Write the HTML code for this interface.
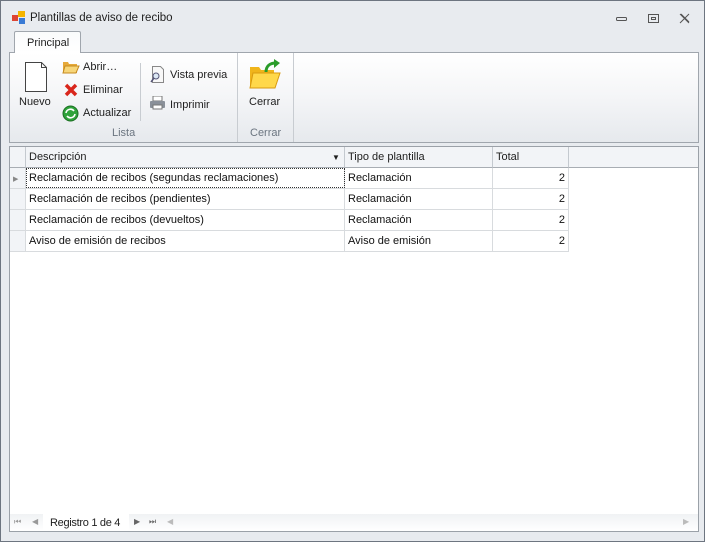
<!DOCTYPE html><html><head><style>
*{margin:0;padding:0;box-sizing:border-box}
body{width:705px;height:542px;overflow:hidden;font-family:"Liberation Sans",sans-serif;font-size:11px;color:#1e1e1e;background:#fff}
.win{position:absolute;left:0;top:0;width:705px;height:542px;background:#e8ebef;border:1px solid #6d7580}
.abs{position:absolute}
.t{position:absolute;white-space:nowrap}
.rib{position:absolute;left:8px;top:51px;width:690px;height:91px;border:1px solid #a0a6ad;background:linear-gradient(#fff,#f4f5f7 50%,#e6e9ed)}
.rib .t{font-size:11px}
.tab{position:absolute;left:13px;top:30px;width:67px;height:22px;border:1px solid #a0a6ad;border-bottom:none;background:linear-gradient(#fafbfc,#fff);border-radius:2px 2px 0 0;z-index:2}
.grid{position:absolute;left:8px;top:145px;width:690px;height:386px;border:1px solid #9ba1a8;background:#fff}
.hd{position:absolute;top:0;height:21px;border-right:1px solid #c4c9cf;border-bottom:1px solid #a8adb3;background:#f2f4f7}
.row{position:absolute;left:0;height:21px;width:559px;border-bottom:1px solid #d8dbde}
.c{position:absolute;top:0;height:20px;border-right:1px solid #d8dbde;padding:4px 3px;color:#111}
</style></head><body><div class="win">
<svg class="abs" style="left:11px;top:10px" width="14" height="14"><rect x="0" y="4" width="6" height="6" fill="#d43"/><rect x="6" y="0" width="7" height="6" fill="#f4b400"/><rect x="7" y="7" width="6" height="6" fill="#3a7bd5"/></svg>
<div class="t" style="left:29px;top:11px;font-size:11.5px">Plantillas de aviso de recibo</div>
<svg class="abs" style="left:613px;top:12px" width="80" height="12" fill="none" stroke="#555"><rect x="2.5" y="4.5" width="10" height="3" rx="1"/><rect x="34.5" y="1.5" width="10" height="8"/><rect x="37.5" y="4.5" width="4" height="2"/><path d="M66 1l9 9M75 1l-9 9M67 1l8 8"/></svg>
<div class="tab"><div class="t" style="left:12px;top:5px;font-size:11px">Principal</div></div>
<div class="rib">
<svg class="abs" style="left:14px;top:8px" width="24" height="32"><path d="M1.5 1.5h16l5 5v24h-21z" fill="#fff" stroke="#444"/><path d="M17.5 1.5v5h5" fill="none" stroke="#444"/></svg>
<div class="t" style="left:9px;top:43px">Nuevo</div>
<svg class="abs" style="left:52px;top:7px" width="18" height="14"><path d="M1 2h5l1 2h8v9H1z" fill="#e6a93a"/><path d="M3 6h14l-3 7H1z" fill="#f7d679" stroke="#c58a1f"/></svg>
<div class="t" style="left:73px;top:8px">Abrir…</div>
<svg class="abs" style="left:54px;top:30px" width="14" height="14"><path d="M2 2l10 10M12 2L2 12" stroke="#d9261c" stroke-width="3.5"/></svg>
<div class="t" style="left:73px;top:31px">Eliminar</div>
<svg class="abs" style="left:52px;top:52px" width="17" height="17"><circle cx="8.5" cy="8.5" r="7.5" fill="#2fa33a" stroke="#1b6e22"/><path d="M4 8a4.5 4.5 0 0 1 8-2M13 9a4.5 4.5 0 0 1-8 2" stroke="#fff" stroke-width="1.6" fill="none"/></svg>
<div class="t" style="left:73px;top:54px">Actualizar</div>
<div class="abs" style="left:130px;top:10px;width:1px;height:58px;background:#c8ccd1"></div>
<svg class="abs" style="left:139px;top:13px" width="16" height="18"><path d="M3.5 .5h8l3 3v13h-11z" fill="#f8f8f8" stroke="#888"/><circle cx="7" cy="10" r="3" fill="#dce8f4" stroke="#557"/><path d="M5 12l-3 4" stroke="#557" stroke-width="1.5"/></svg>
<div class="t" style="left:160px;top:16px">Vista previa</div>
<svg class="abs" style="left:139px;top:43px" width="17" height="14"><rect x="4" y="0" width="9" height="5" fill="#fff" stroke="#777"/><rect x="1" y="5" width="15" height="7" rx="1" fill="#8a9099"/><rect x="4" y="9" width="9" height="4" fill="#fff" stroke="#777"/></svg>
<div class="t" style="left:160px;top:46px">Imprimir</div>
<div class="t" style="left:102px;top:74px;color:#6b7580">Lista</div>
<div class="abs" style="left:227px;top:0;width:1px;height:89px;background:#c8ccd1"></div>
<svg class="abs" style="left:238px;top:6px" width="34" height="32"><path d="M2 8h9l2 3h13v17H2z" fill="#f0b51b"/><path d="M5 14h27l-5 15H2z" fill="#ffd84a" stroke="#d89a10"/><path d="M18 13c0-6 4-9 10-9" stroke="#2a9c2a" stroke-width="3" fill="none"/><path d="M26 0l6 4-6 5z" fill="#2a9c2a"/></svg>
<div class="t" style="left:239px;top:43px">Cerrar</div>
<div class="t" style="left:240px;top:74px;color:#6b7580">Cerrar</div>
<div class="abs" style="left:283px;top:0;width:1px;height:89px;background:#c8ccd1"></div>
</div>
<div class="grid">
<div class="hd" style="left:0;width:16px"></div>
<div class="hd" style="left:16px;width:319px"><div class="t" style="left:3px;top:4px">Descripción</div><div class="t" style="left:306px;top:6px;font-size:8px">▼</div></div>
<div class="hd" style="left:335px;width:148px"><div class="t" style="left:3px;top:4px">Tipo de plantilla</div></div>
<div class="hd" style="left:483px;width:76px"><div class="t" style="left:3px;top:4px">Total</div></div>
<div class="hd" style="left:559px;width:129px;border-right:none"></div>
<div class="row" style="top:21px"><div class="c" style="left:0;width:16px;background:#f2f4f7"><span style="font-size:7px;color:#888">▶</span></div><div class="c" style="left:16px;width:319px;outline:1px dotted #333;outline-offset:-1px">Reclamación de recibos (segundas reclamaciones)</div><div class="c" style="left:335px;width:148px">Reclamación</div><div class="c" style="left:483px;width:76px;text-align:right">2</div></div>
<div class="row" style="top:42px"><div class="c" style="left:0;width:16px;background:#f2f4f7"></div><div class="c" style="left:16px;width:319px">Reclamación de recibos (pendientes)</div><div class="c" style="left:335px;width:148px">Reclamación</div><div class="c" style="left:483px;width:76px;text-align:right">2</div></div>
<div class="row" style="top:63px"><div class="c" style="left:0;width:16px;background:#f2f4f7"></div><div class="c" style="left:16px;width:319px">Reclamación de recibos (devueltos)</div><div class="c" style="left:335px;width:148px">Reclamación</div><div class="c" style="left:483px;width:76px;text-align:right">2</div></div>
<div class="row" style="top:84px"><div class="c" style="left:0;width:16px;background:#f2f4f7"></div><div class="c" style="left:16px;width:319px">Aviso de emisión de recibos</div><div class="c" style="left:335px;width:148px">Aviso de emisión</div><div class="c" style="left:483px;width:76px;text-align:right">2</div></div>
<div class="abs" style="left:0;top:367px;width:688px;height:17px;background:linear-gradient(#f0f2f4,#fff)">
<div class="t" style="left:4px;top:3px;font-size:8px;color:#999">⏮</div>
<div class="t" style="left:22px;top:3px;font-size:8px;color:#999">◀</div>
<div class="abs" style="left:33px;top:0;width:86px;height:17px;background:#fff"></div>
<div class="t" style="left:40px;top:3px;font-size:11px;letter-spacing:-0.3px">Registro 1 de 4</div>
<div class="t" style="left:124px;top:3px;font-size:8px;color:#666">▶</div>
<div class="t" style="left:139px;top:3px;font-size:8px;color:#666">⏭</div>
<div class="t" style="left:157px;top:3px;font-size:8px;color:#bbb">◀</div>
<div class="t" style="left:673px;top:3px;font-size:8px;color:#bbb">▶</div>
</div>
</div>
</div></body></html>
